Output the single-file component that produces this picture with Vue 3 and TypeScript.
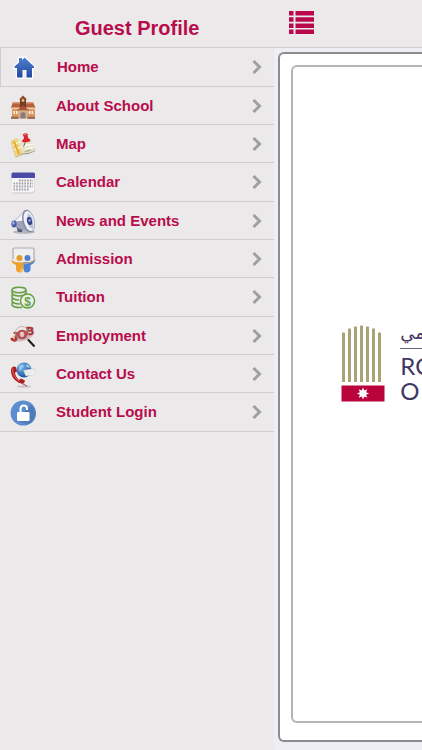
<script setup lang="ts">
import { ref } from 'vue'

interface MenuItem {
  id: string
  label: string
}

const items: MenuItem[] = [
  { id: 'home', label: 'Home' },
  { id: 'about', label: 'About School' },
  { id: 'map', label: 'Map' },
  { id: 'calendar', label: 'Calendar' },
  { id: 'news', label: 'News and Events' },
  { id: 'admission', label: 'Admission' },
  { id: 'tuition', label: 'Tuition' },
  { id: 'employment', label: 'Employment' },
  { id: 'contact', label: 'Contact Us' },
  { id: 'login', label: 'Student Login' },
]

const active = ref('home')
const open = ref(true)
const bars = [
  { x: 1, top: 7 },
  { x: 7, top: 3 },
  { x: 13, top: 1 },
  { x: 19, top: 0 },
  { x: 25, top: 1 },
  { x: 31, top: 3 },
  { x: 37, top: 7 },
]
</script>

<template>
  <div class="page">
    <nav v-if="open" class="drawer" aria-label="Guest menu">
      <h1 class="title">Guest Profile</h1>
      <ul class="menu">
        <li v-for="item in items" :key="item.id" class="entry">
          <a
            class="row"
            :class="{ active: active === item.id }"
            :href="'#' + item.id"
            @click="active = item.id"
          >
            <svg class="icon" viewBox="0 0 26 26" aria-hidden="true">
              <g v-if="item.id === 'home'">
                <path d="M6 22.500V13H3.500v-1.500L8 7.500V3h3v2l2.500-2.500 9.500 9V13h-2v9.500h-5.500V15h-4v7.500z" fill="none" stroke="#fff" stroke-width="2.600" stroke-linejoin="round" />
                <path d="M6 22.500V13H3.500v-1.500L8 7.500V3h3v2l2.500-2.500 9.500 9V13h-2v9.500h-5.500V15h-4v7.500z" fill="url(#homeFill)" />
              </g>
              <g v-else-if="item.id === 'about'">
                <path d="M2 14h23v10H2z" fill="#d99a68" />
                <path d="M3 8h20l2.500 6H.8z" fill="#b9603a" />
                <path d="M3 8h20l.6 1.500H2.300z" fill="#dc9870" />
                <path d="M1 13.500h24.500V15H1z" fill="#f0cdb0" />
                <path d="M10 5h6v9h-6z" fill="#74402b" />
                <path d="m9 5.500 4-4 4 4z" fill="#91482d" />
                <circle cx="13" cy="6.500" r="1.400" fill="#e9bb78" />
                <path d="m6.500 16.500 6.500-5 6.500 5z" fill="#a9552f" />
                <path d="M8 16.500h10v8H8z" fill="#d4ac8a" />
                <path d="M10.500 24.500v-5q2.500-3 5 0v5z" fill="#8d7b7c" />
                <path d="M3.500 17h1.500v3H3.500zM6 17h1.500v3H6zM18.800 17h1.500v3h-1.500zM21.500 17h1.500v3h-1.500z" fill="#fff0da" />
                <path d="M1 22.500h7.500V25H1zM17.500 22.500H25V25h-7.500z" fill="#9d7353" />
              </g>
              <g v-else-if="item.id === 'map'">
                <path d="m1 10 6-3.500 5 3 7-2.500 6.500 12-7 3-6 .5L5.500 25.500z" fill="#98978c" />
                <path d="m.8 9 6-3 5.500 3 7-3 6 12.500-7 2.500-6 .5-6.800 3.500z" fill="#e6e1c4" />
                <path d="m.8 9 6-3 5.500 15.500-6.800 3.500z" fill="#efd27a" />
                <path d="m3 13 7-3.500M4.500 18l7-3.500" stroke="#fff8dc" stroke-width="1.200" />
                <path d="M4 9.500 9 22" stroke="#e3a32c" stroke-width="1.700" />
                <path d="m14 14 9-2M15 18l8-3" stroke="#fbfbf4" stroke-width="1.400" />
                <path d="m14 19 5-2 3 1.500-6 2z" fill="#b3c49b" />
                <path d="m15.500 9.500-1.800 5" stroke="#6b6b6b" />
                <path d="M12.500 2.500q3-2 5.500-.5l-.5 1.500 1 3 2 1.200-.5 1.500q-4 2-8 .5l.5-2 1.500-1-.5-2.700z" fill="#d8262d" />
                <path d="m13.500 2.800 3-.8" stroke="#f38883" />
              </g>
              <g v-else-if="item.id === 'calendar'">
                <path d="M1.500 7H25v14l-3 2.500H2.500z" fill="#c6c5c7" />
                <path d="M2 6h22.500v14.500L22 22.500H2z" fill="#f5f5f6" />
                <path d="M1.500 4Q1.500 2.500 3 2.500h20.500Q25 2.500 25 4v4H1.500z" fill="#4b4ba8" />
                <path d="M9 10.500h14M3.500 13.500h19.500M3.500 16.500h19.500M3.500 19.500h16" stroke="#a0a0a6" stroke-width="1.800" stroke-dasharray="1.600 1.100" />
              </g>
              <g v-else-if="item.id === 'news'">
                <ellipse cx="14" cy="23" rx="11" ry="1.800" fill="#b4b4ba" />
                <path d="m6 17 7 2-1 4H8z" fill="#555d7c" />
                <path d="M15 1.500 4 12l-1 5 4 2 12 4z" fill="#9da3b8" />
                <path d="M15 2 4.500 12.500l11-1z" fill="#f5f6fb" />
                <ellipse cx="18.500" cy="12" rx="6" ry="11.500" fill="#868ba0" transform="rotate(-14 18.500 12)" />
                <ellipse cx="19" cy="12" rx="5" ry="10.300" fill="#eef0f7" transform="rotate(-14 19 12)" />
                <path d="M18 4q6 4 5.500 16-5-1-6.500-8z" fill="#bcc1d3" />
                <ellipse cx="19.500" cy="12" rx="2.500" ry="4" fill="#35408a" transform="rotate(-14 19.500 12)" />
                <circle cx="19.500" cy="11.500" r="1.300" fill="#93a4dc" />
                <ellipse cx="4" cy="15" rx="2.600" ry="3.400" fill="#475ea2" />
                <ellipse cx="3.500" cy="14" rx="1.200" ry="1.800" fill="#a1b9e9" />
              </g>
              <g v-else-if="item.id === 'admission'">
                <path d="M3 12V2.500Q3 1 4.500 1h18Q24 1 24 2.500V12" fill="#f0eff0" stroke="#aaa9ab" stroke-width="1.200" />
                <circle cx="9.500" cy="11" r="3" fill="#e69b28" />
                <circle cx="17.500" cy="11" r="3" fill="#4f7fd0" />
                <path d="M1 12.500q3 3 8 2.800h4.500V21q0 4.500-3.500 4.500-4.500 0-4-5V18Q2.500 17 1 12.500" fill="#efa12c" />
                <path d="M25.500 12.500q-3 3-7 2.800h-5V21q0 4.500 3 4.500 4.500 0 4-5V18q3.500-1 5-5.500" fill="#4c83d6" />
                <path d="m25.500 12.500-5.500 3-6.500 1.500" fill="none" stroke="#c9a467" stroke-width="1.200" />
                <path d="M10 25q0-3 3.500-4-.5 4-3.500 4" fill="#ffc760" />
              </g>
              <g v-else-if="item.id === 'tuition'" fill="none" stroke="#64a044" stroke-width="1.500">
                <ellipse cx="9" cy="5" rx="7" ry="2.700" />
                <path d="M2 5v3q1 3 7 3t7-3V5M2 9.500V12q1 3 7 3M2 13.500V16q1 3 8 3M2 17.500V20q2 3 10 2.500" />
                <circle cx="17.500" cy="16" r="7" fill="#edf0e9" />
                <text class="dollar" x="17.500" y="20.500" text-anchor="middle" fill="#64a044" stroke="none">$</text>
              </g>
              <g v-else-if="item.id === 'employment'">
                <ellipse cx="12" cy="13" rx="11" ry="4" fill="#e5bab8" transform="rotate(-12 12 13)" />
                <g class="job" fill="#c2393b" stroke="#8f2a2d" stroke-width=".6">
                  <text x="1" y="17" transform="rotate(6 4 13)">J</text>
                  <text x="7" y="15">O</text>
                  <text x="16" y="11" class="small">B</text>
                </g>
                <circle cx="12" cy="9" r="6.500" fill="#fff" fill-opacity=".12" stroke="#b3a19f" stroke-width=".8" />
                <path d="m16.500 13.500 2 2" stroke="#aaa" stroke-width="1.500" />
                <path d="m18 15.500 6.500 7" stroke="#1e1918" stroke-width="2" />
              </g>
              <g v-else-if="item.id === 'contact'">
                <ellipse cx="14" cy="24.500" rx="7" ry="1" fill="#c9bebf" />
                <circle cx="14" cy="8" r="7.500" fill="url(#globeFill)" />
                <path d="M9 4q4-3 5 0l-3 4-2 1zM16 2q4 1 4.500 4l-4-1z" fill="#95c6ed" />
                <path d="m13.500 8.500 11-2 1 6-9.500 1.500z" fill="#f1f2f3" stroke="#c9cdd0" stroke-width=".5" />
                <path d="m13.500 8.500 6.500 3 4.500-5" fill="none" stroke="#cbcfd2" stroke-width=".6" />
                <path d="M3 4.500 1 7q-1 9 8 14l5 .5 1-3-4-2-2 1.500q-4-4-4-7.500l2-1-1-4.500z" fill="#ad1e22" />
                <path d="M2.500 6.500q0 8 7 13" fill="none" stroke="#ed6c68" stroke-width=".9" />
                <path d="m11 21 6 3" stroke="#a3272b" stroke-width=".8" />
              </g>
              <g v-else>
                <circle cx="13.200" cy="13" r="12.600" fill="#5d8dce" />
                <path d="M13.200 13 21 5q5 4 4.800 9-.5 8-7.800 10.500L8 21z" fill="#4e7bb9" />
                <path d="M10.500 13V9q0-3.500 3.200-3.500T17 8.500V10" fill="none" stroke="#fff" stroke-width="2" />
                <rect x="7" y="12" width="12.500" height="9" rx="1.200" fill="#fff" />
              </g>
            </svg>
            <span class="label">{{ item.label }}</span>
            <svg class="chevron" viewBox="0 0 10 16" aria-hidden="true">
              <path d="m1.500 2 6 6-6 6" fill="none" stroke="#9d9fa2" stroke-width="3" />
            </svg>
          </a>
        </li>
      </ul>
    </nav>

    <div class="content">
      <header class="toolbar">
        <button class="toggle" type="button" aria-label="Menu" @click="open = !open">
          <svg viewBox="0 0 26 24" aria-hidden="true">
            <path d="M0 0h4.500v4.500H0zM6.500 0H25v4.500H6.500zM0 6.200h4.500v4.500H0zM6.500 6.200H25v4.500H6.500zM0 12.400h4.500v4.500H0zM6.500 12.400H25v4.500H6.500zM0 18.600h4.500v4.500H0zM6.500 18.600H25v4.500H6.500z" fill="#b9084c" />
          </svg>
        </button>
      </header>
      <main class="stage">
        <div class="frame">
          <div class="inner">
            <svg class="emblem" viewBox="0 0 44 77" aria-hidden="true">
              <path
                v-for="bar in bars"
                :key="bar.x"
                :d="`M${bar.x} 57V${bar.top + 1}q1.500-1.500 3 0V57z`"
                fill="#aaa475"
              />
              <path d="M.5 60.500h43v16H.5z" fill="#b8043a" />
              <path d="m22 62.500 1.300 3 3-1.200-1.200 3 3 1.200-3 1.300 1.200 3-3-1.200L22 74.500l-1.300-2.900-3 1.200 1.200-3-3-1.300 3-1.200-1.200-3 3 1.200z" fill="#fff" />
            </svg>
            <div class="wordmark">
              <bdi class="arabic" lang="ar">مي</bdi>
              <span class="latin">RO</span>
              <span class="latin second">O</span>
            </div>
          </div>
        </div>
      </main>
    </div>

    <svg class="defs" width="0" height="0" aria-hidden="true">
      <defs>
        <linearGradient id="homeFill" x1="0" y1="0" x2="0" y2="1">
          <stop offset="0" stop-color="#507fd0" />
          <stop offset="1" stop-color="#2349a0" />
        </linearGradient>
        <radialGradient id="globeFill" cx=".35" cy=".3" r=".75">
          <stop offset="0" stop-color="#77b5e6" />
          <stop offset="1" stop-color="#174f9a" />
        </radialGradient>
      </defs>
    </svg>
  </div>
</template>

<style>
body {
  background: #ebe9ea;
}
</style>

<style scoped>
.page {
  display: flex;
  min-height: 100vh;
  overflow: hidden;
  background: #ebe9ea;
  font-family: "Liberation Sans", Arial, sans-serif;
  color: #b90c4c;
}

.drawer {
  flex: 0 0 65%;
}

.title {
  box-sizing: border-box;
  height: 48px;
  margin: 0;
  padding-top: 8px;
  border-bottom: 1px solid #d0ced0;
  font-size: 20px;
  line-height: 40px;
  text-align: center;
}

.menu {
  margin: 0;
  padding: 0;
  list-style: none;
}

.row {
  display: flex;
  align-items: center;
  box-sizing: border-box;
  height: 38px;
  padding: 0 12px 0 10px;
  border-bottom: 1px solid #cfcdcf;
  color: inherit;
  font-size: 15px;
  font-weight: bold;
  line-height: 20px;
  text-decoration: none;
}

.entry:nth-child(3n + 1) .row {
  height: 39px;
}

.row.active {
  border-left: 1px solid #cfcdcf;
}

.icon {
  flex: none;
  width: 26px;
  height: 26px;
  margin: 2px 20px 0 0;
}

.label {
  flex: 1;
  white-space: nowrap;
}

.chevron {
  flex: none;
  width: 10px;
  height: 16px;
}

.dollar {
  font-size: 12px;
  font-weight: bold;
}

.job {
  font-size: 13px;
  font-weight: bold;
}

.small {
  font-size: 11px;
}

.content {
  display: flex;
  flex: 1;
  flex-direction: column;
  min-width: 0;
}

.toolbar {
  box-sizing: border-box;
  height: 48px;
  padding: 11px 0 0 15px;
  border-bottom: 1px solid #d0ced0;
}

.toggle {
  display: block;
  width: 26px;
  height: 24px;
  padding: 0;
  border: 0;
  background: none;
}

.toggle svg {
  display: block;
}

.stage {
  display: flex;
  flex: 1;
  padding: 4px 0 8px 4px;
  background: #efeef5;
}

.frame {
  display: flex;
  flex: 1;
  min-width: 0;
  padding: 11px 0 17px 11px;
  border: 2px solid #8b8b90;
  border-right: 0;
  border-radius: 6px 0 0 6px;
  background: #fff;
}

.inner {
  display: flex;
  flex: 1;
  align-items: center;
  gap: 15px;
  min-width: 0;
  padding: 0 0 62px 48px;
  overflow: hidden;
  border: 2px solid #b5b5b6;
  border-right: 0;
  border-radius: 6px 0 0 6px;
}

.emblem {
  flex: none;
  width: 44px;
  height: 77px;
}

.wordmark {
  display: flex;
  flex: none;
  flex-direction: column;
  color: #3f3764;
  white-space: nowrap;
}

.arabic {
  height: 25px;
  border-bottom: 1px solid #6a6384;
  font-family: "DejaVu Sans", sans-serif;
  font-size: 18px;
  line-height: 20px;
  text-align: left;
}

.latin {
  padding-top: 4px;
  font-family: Lato, sans-serif;
  font-size: 24px;
  line-height: 25px;
}

.second {
  padding-top: 0;
}

.defs {
  position: absolute;
}
</style>
